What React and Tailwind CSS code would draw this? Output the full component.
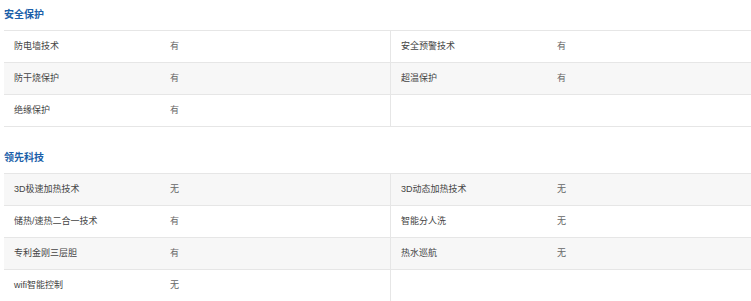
const sections = [
  {
    title: "安全保护",
    startGray: false,
    rows: [
      ["防电墙技术", "有", "安全预警技术", "有"],
      ["防干烧保护", "有", "超温保护", "有"],
      ["绝缘保护", "有", "", ""],
    ],
  },
  {
    title: "领先科技",
    startGray: true,
    rows: [
      ["3D极速加热技术", "无", "3D动态加热技术", "无"],
      ["储热/速热二合一技术", "有", "智能分人洗", "无"],
      ["专利金刚三层胆", "有", "热水巡航", "无"],
      ["wifi智能控制", "无", "", ""],
    ],
  },
];

const Cell = ({ label, value, divider }) => (
  <div
    className={`flex items-center ${divider ? "w-[387px] shrink-0 border-r border-[#e6e6e6]" : "flex-1"}`}
  >
    <div className="w-[156px] pl-[10px] text-[#444]">{label}</div>
    <div className="pl-[10px] text-[#666]">{value}</div>
  </div>
);

export default function App() {
  return (
    <div
      className="h-[301px] w-[751px] overflow-hidden bg-white pl-[4px] text-[9px]"
      style={{ fontFamily: '"Liberation Sans", "Noto Sans CJK SC", sans-serif' }}
    >
      {sections.map((section, si) => (
        <section key={section.title} className={si > 0 ? "mt-[16px]" : ""}>
          <h2 className="h-[30px] text-[10px] font-bold leading-[29px] text-[#1b5fa9]">
            {section.title}
          </h2>
          <div className="border-t border-[#e6e6e6]">
            {section.rows.map((row, ri) => {
              const gray = (ri % 2 === 0) === section.startGray;
              return (
                <div
                  key={ri}
                  className={`flex h-[32px] border-b border-[#e6e6e6] ${gray ? "bg-[#f7f7f7]" : "bg-white"}`}
                >
                  <Cell label={row[0]} value={row[1]} divider />
                  <Cell label={row[2]} value={row[3]} />
                </div>
              );
            })}
          </div>
        </section>
      ))}
    </div>
  );
}
